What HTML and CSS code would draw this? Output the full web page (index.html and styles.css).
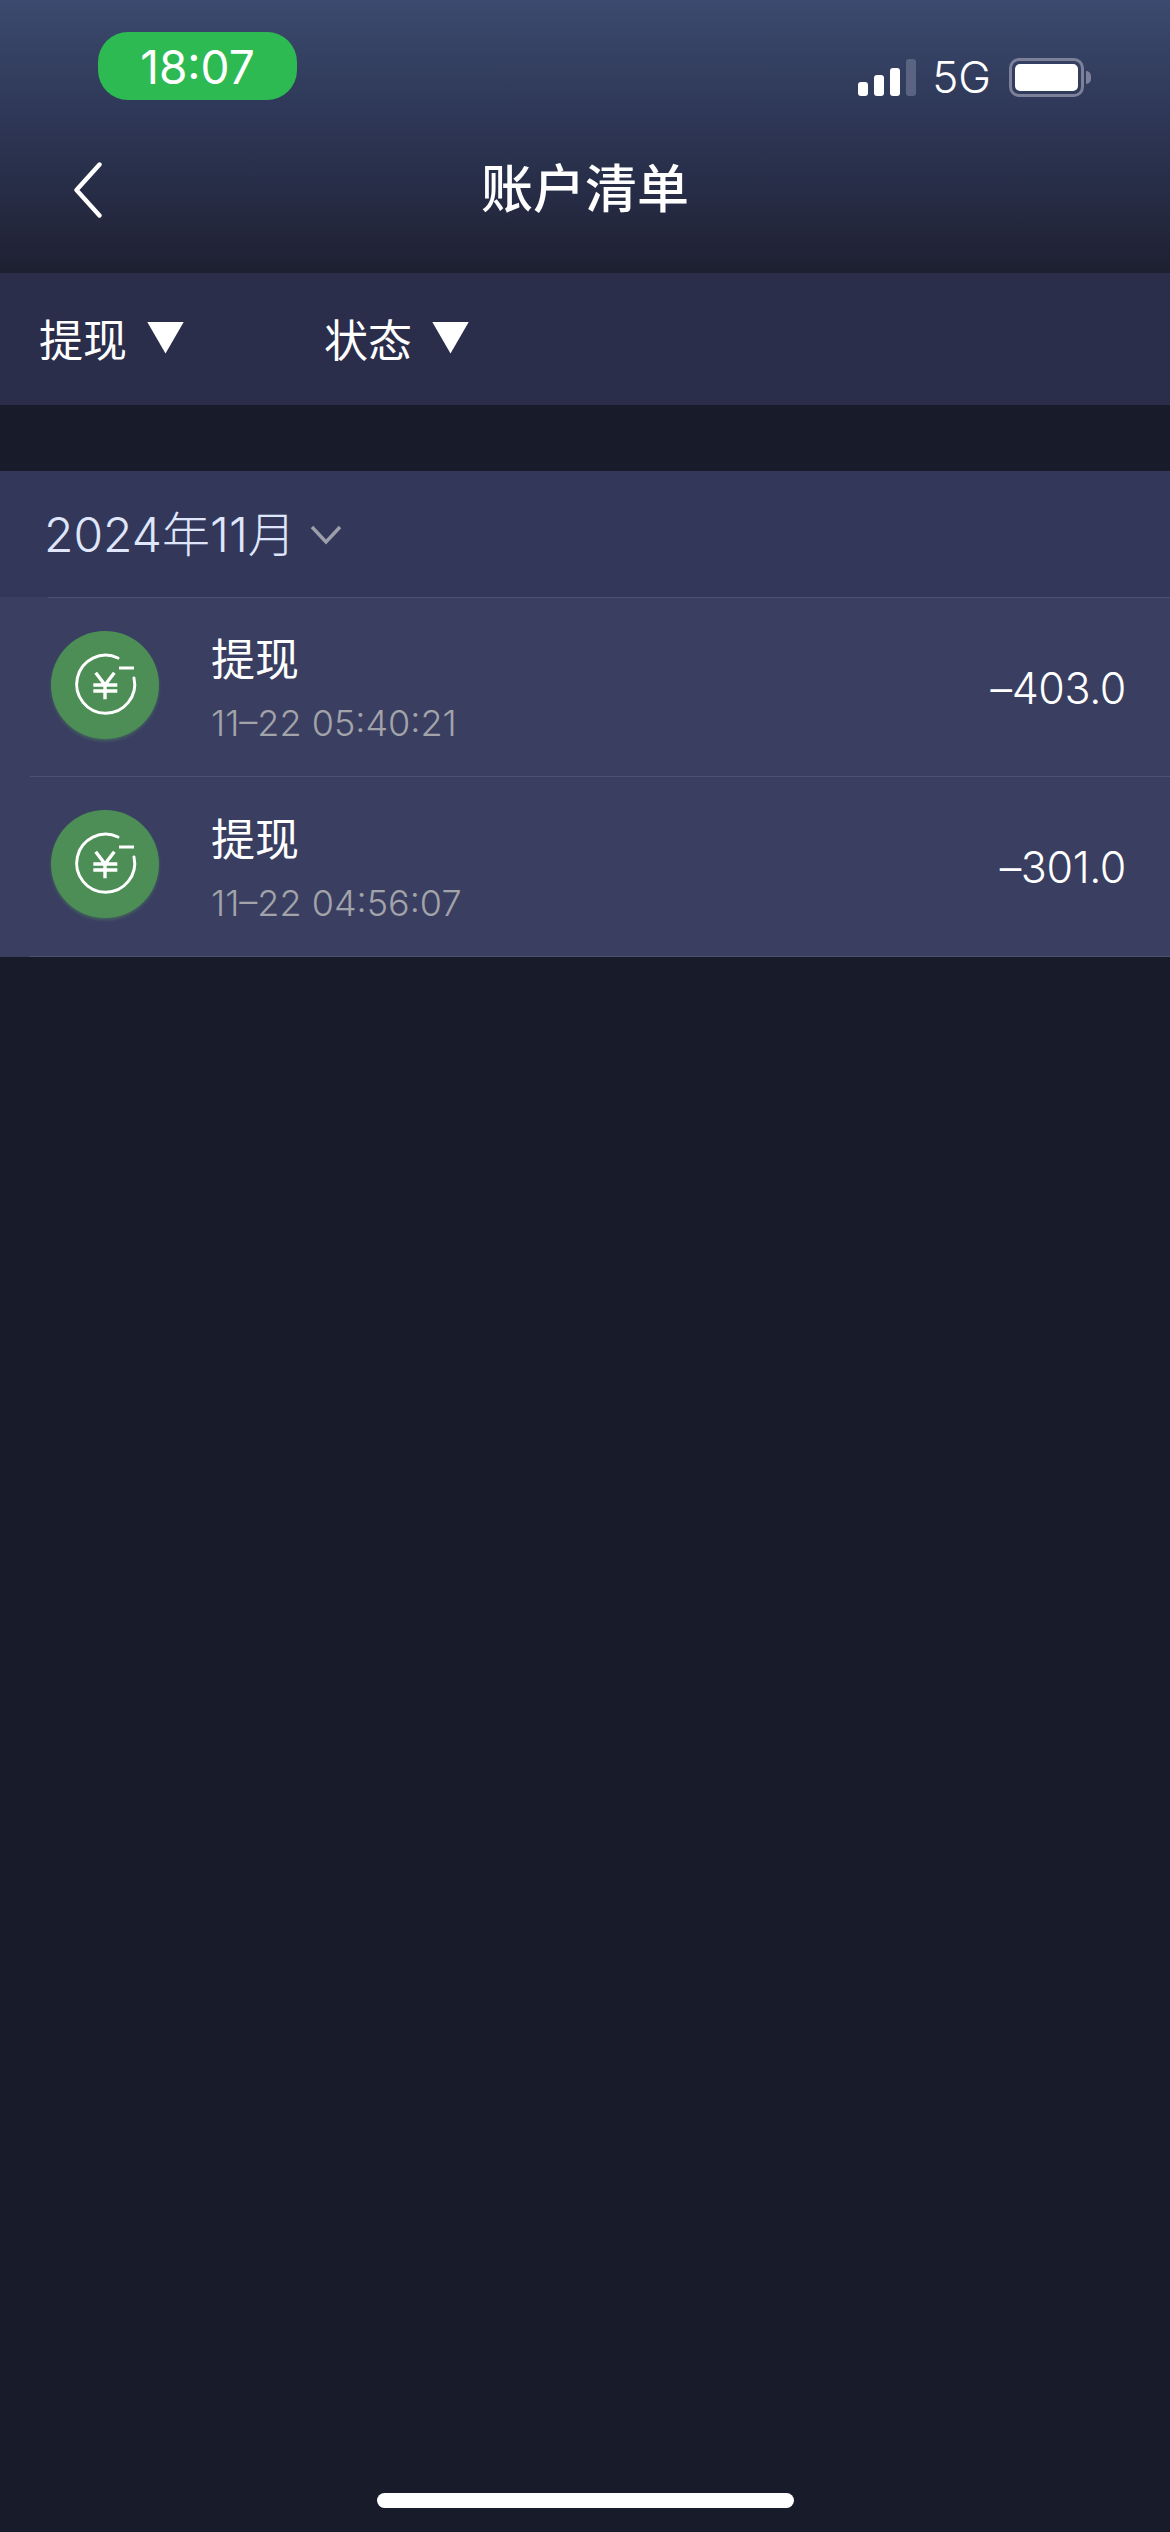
FILE: index.html
```html
<!DOCTYPE html>
<html lang="zh-CN">
<head>
<meta charset="utf-8">
<title>账户清单</title>
<link rel="stylesheet" href="styles.css">
</head>
<body>
<div class="page">
  <header class="header">
    <div class="status">
      <div class="time">18:07</div>
      <div class="status-right">
        <div class="signal"><i class="b1"></i><i class="b2"></i><i class="b3"></i><i class="b4"></i></div>
        <span class="net">5G</span>
        <div class="battery"><div class="battery-fill"></div></div>
        <div class="battery-nub"></div>
      </div>
    </div>
    <div class="nav">
      <svg class="back" width="28" height="56" viewBox="0 0 28 56"><path d="M25.5 2.5 L2.5 28 L25.5 53.5" fill="none" stroke="#fff" stroke-width="4.4" stroke-linecap="round" stroke-linejoin="round"/></svg>
      <h1 class="title">账户清单</h1>
    </div>
  </header>

  <section class="filters">
    <div class="filter"><span>提现</span><i class="tri"></i></div>
    <div class="filter"><span>状态</span><i class="tri"></i></div>
  </section>

  <section class="list">
    <div class="month">
      <span>2024年11月</span>
      <svg class="month-arrow" width="32" height="20" viewBox="0 0 32 20"><path d="M2 2 L16 17 L30 2" fill="none" stroke="#9c9eaa" stroke-width="3.4"/></svg>
    </div>
    <div class="rows">
      <div class="line line-first"></div>
      <div class="row">
        <svg class="coin" width="108" height="108" viewBox="0 0 108 108"><g fill="none" stroke="#fff" stroke-width="3"><path d="M67 27 A29 29 0 1 0 83 47" stroke-linecap="round"/><path d="M68 37 H83"/><path d="M44.7 41.7 L54 54 L63.3 41.7 M42.3 54 H66.3 M42.3 60 H66.3 M54 54 V68.3" stroke-width="3.4"/></g></svg>
        <div class="info">
          <div class="name">提现</div>
          <div class="date">11–22 05:40:21</div>
        </div>
        <div class="amount">–403.0</div>
      </div>
      <div class="line"></div>
      <div class="row row-last">
        <svg class="coin" width="108" height="108" viewBox="0 0 108 108"><g fill="none" stroke="#fff" stroke-width="3"><path d="M67 27 A29 29 0 1 0 83 47" stroke-linecap="round"/><path d="M68 37 H83"/><path d="M44.7 41.7 L54 54 L63.3 41.7 M42.3 54 H66.3 M42.3 60 H66.3 M54 54 V68.3" stroke-width="3.4"/></g></svg>
        <div class="info">
          <div class="name">提现</div>
          <div class="date">11–22 04:56:07</div>
        </div>
        <div class="amount">–301.0</div>
      </div>
      <div class="line"></div>
    </div>
  </section>

  <div class="home"></div>
</div>
</body>
</html>
```
FILE: styles.css
```css
* { box-sizing: border-box; }
html, body { margin: 0; padding: 0; }
body {
  background: #181b2a;
  color: #fff;
  font-family: "Inter", "Noto Sans CJK SC", sans-serif;
}
.page {
  width: 1170px;
  height: 2532px;
  display: flex;
  flex-direction: column;
  overflow: hidden;
}
.header {
  height: 273px;
  background: linear-gradient(180deg, #3b4a6e 0%, #2f3858 40%, #262c45 72%, #1e2031 100%);
}
.status {
  height: 131px;
  padding: 32px 79px 0 98px;
  display: flex;
  justify-content: space-between;
  align-items: flex-start;
}
.time {
  width: 199px;
  height: 68px;
  border-radius: 30px;
  background: #2dba52;
  font-size: 46px;
  line-height: 70px;
  text-align: center;
}
.status-right {
  margin-top: 26px;
  display: flex;
  align-items: center;
  height: 39px;
}
.signal {
  display: flex;
  align-items: flex-end;
  gap: 6px;
  height: 37px;
  margin-right: 16px;
}
.signal i { display: block; width: 10px; border-radius: 3px; background: #fff; }
.signal .b1 { height: 14px; }
.signal .b2 { height: 21px; }
.signal .b3 { height: 28px; }
.signal .b4 { height: 37px; background: #5a6482; }
.net { font-size: 44px; font-weight: 300; line-height: 39px; margin-right: 18px; }
.battery {
  width: 75px;
  height: 39px;
  border: 3px solid #7c8199;
  border-radius: 10px;
  padding: 3px;
}
.battery-fill { width: 100%; height: 100%; background: #fff; border-radius: 5px; }
.battery-nub { width: 5px; height: 13px; margin-left: 2px; background: #7c8199; border-radius: 0 5px 5px 0; }
.nav {
  height: 116px;
  position: relative;
  display: flex;
  align-items: center;
  justify-content: center;
}
.back { position: absolute; left: 74px; top: 31px; }
.title {
  margin: 2px 0 0;
  font-size: 52px;
  font-weight: 500;
  line-height: 116px;
}
.filters {
  height: 132px;
  background: #2b2e4b;
  padding: 0 0 3px 39px;
  display: flex;
  align-items: center;
  gap: 140px;
}
.filter {
  display: flex;
  align-items: center;
  gap: 20px;
  font-size: 44px;
}
.tri {
  display: block;
  width: 37px;
  height: 32px;
  background: #fff;
  clip-path: polygon(0 0, 100% 0, 50% 100%);
}
.list { margin-top: 66px; }
.month {
  height: 126px;
  background: #33385a;
  padding: 0 0 6px 44px;
  display: flex;
  align-items: center;
  gap: 14px;
  font-size: 48px;
  font-weight: 300;
  color: #dfe6fb;
}
.month-arrow { margin-top: 8px; }
.rows { background: #3a3f62; }
.line { height: 1px; margin-left: 30px; background: #4d5274; }
.line-first { margin-left: 48px; }
.row {
  height: 178px;
  padding: 0 44px 5px 51px;
  display: flex;
  align-items: center;
}
.row-last { height: 179px; }
.coin {
  flex: none;
  border-radius: 50%;
  background: #4c8e55;
  box-shadow: 0 2px 3px rgba(90, 160, 90, .35);
}
.info { margin: 6px 0 0 52px; flex: 1; }
.name { font-size: 44px; line-height: 60px; }
.date { font-size: 36px; font-weight: 300; line-height: 44px; color: #a3a4a9; margin-top: 11px; }
.amount { margin-top: 6px; font-size: 43px; font-weight: 300; letter-spacing: -.4px; }
.home {
  width: 417px;
  height: 15px;
  border-radius: 8px;
  background: #fff;
  margin: auto auto 24px;
}
```
